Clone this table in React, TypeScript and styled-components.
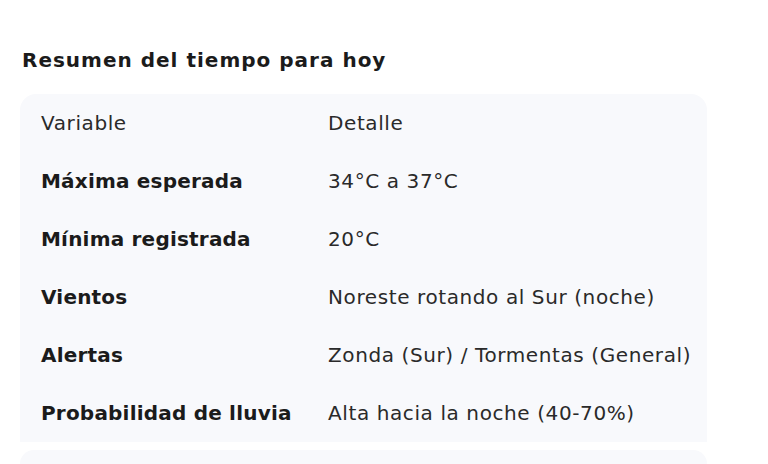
import React from 'react'
import styled, { createGlobalStyle } from 'styled-components'

const GlobalStyle = createGlobalStyle`
  html, body {
    margin: 0;
    padding: 0;
    background: #ffffff;
  }
  body {
    font-family: "DejaVu Sans", "Noto Sans", "Liberation Sans", sans-serif;
    color: #1f1f1f;
  }
`

interface Row {
  label: string
  detail: string
}

const rows: Row[] = [
  { label: 'Máxima esperada', detail: '34°C a 37°C' },
  { label: 'Mínima registrada', detail: '20°C' },
  { label: 'Vientos', detail: 'Noreste rotando al Sur (noche)' },
  { label: 'Alertas', detail: 'Zonda (Sur) / Tormentas (General)' },
  { label: 'Probabilidad de lluvia', detail: 'Alta hacia la noche (40-70%)' },
]

const App: React.FC = () => {
  return (
    <>
      <GlobalStyle />
      <StyledPage>
        <StyledTitle>Resumen del tiempo para hoy</StyledTitle>
        <StyledPanel>
          <StyledTable>
            <thead>
              <tr>
                <StyledHead>Variable</StyledHead>
                <StyledHead>Detalle</StyledHead>
              </tr>
            </thead>
            <tbody>
              {rows.map((row) => (
                <tr key={row.label}>
                  <StyledLabel>{row.label}</StyledLabel>
                  <StyledCell>{row.detail}</StyledCell>
                </tr>
              ))}
            </tbody>
          </StyledTable>
        </StyledPanel>
        <StyledNextPanel />
      </StyledPage>
    </>
  )
}

const StyledPage = styled.div`
  width: 768px;
  height: 464px;
  overflow: hidden;
  padding: 44px 61px 0 20px;
  box-sizing: border-box;
  display: flex;
  flex-direction: column;
`

const StyledTitle = styled.h2`
  margin: 0 0 0 2px;
  font-size: 20px;
  line-height: 32px;
  font-weight: 700;
  letter-spacing: 1px;
  color: #1b1b1b;
`

const StyledPanel = styled.div`
  margin-top: 18px;
  background: #f8f9fc;
  border-radius: 16px 16px 0 0;
`

const StyledTable = styled.table`
  width: 100%;
  border-collapse: collapse;
`

const StyledHead = styled.th`
  height: 58px;
  padding: 0 0 0 21px;
  text-align: left;
  font-size: 20px;
  font-weight: 400;
  letter-spacing: 0.6px;
  color: #2a2a2a;
  white-space: nowrap;
  &:first-child {
    width: 266px;
  }
`

const StyledLabel = styled.td`
  height: 58px;
  padding: 0 0 0 21px;
  font-size: 20px;
  font-weight: 700;
  letter-spacing: 0.2px;
  color: #1b1b1b;
  white-space: nowrap;
`

const StyledCell = styled.td`
  height: 58px;
  padding: 0 0 0 21px;
  font-size: 20px;
  font-weight: 400;
  letter-spacing: 0.6px;
  color: #2a2a2a;
  white-space: nowrap;
`

const StyledNextPanel = styled.div`
  margin-top: 8px;
  height: 40px;
  background: #f8f9fc;
  border-radius: 16px 16px 0 0;
`

export default App
